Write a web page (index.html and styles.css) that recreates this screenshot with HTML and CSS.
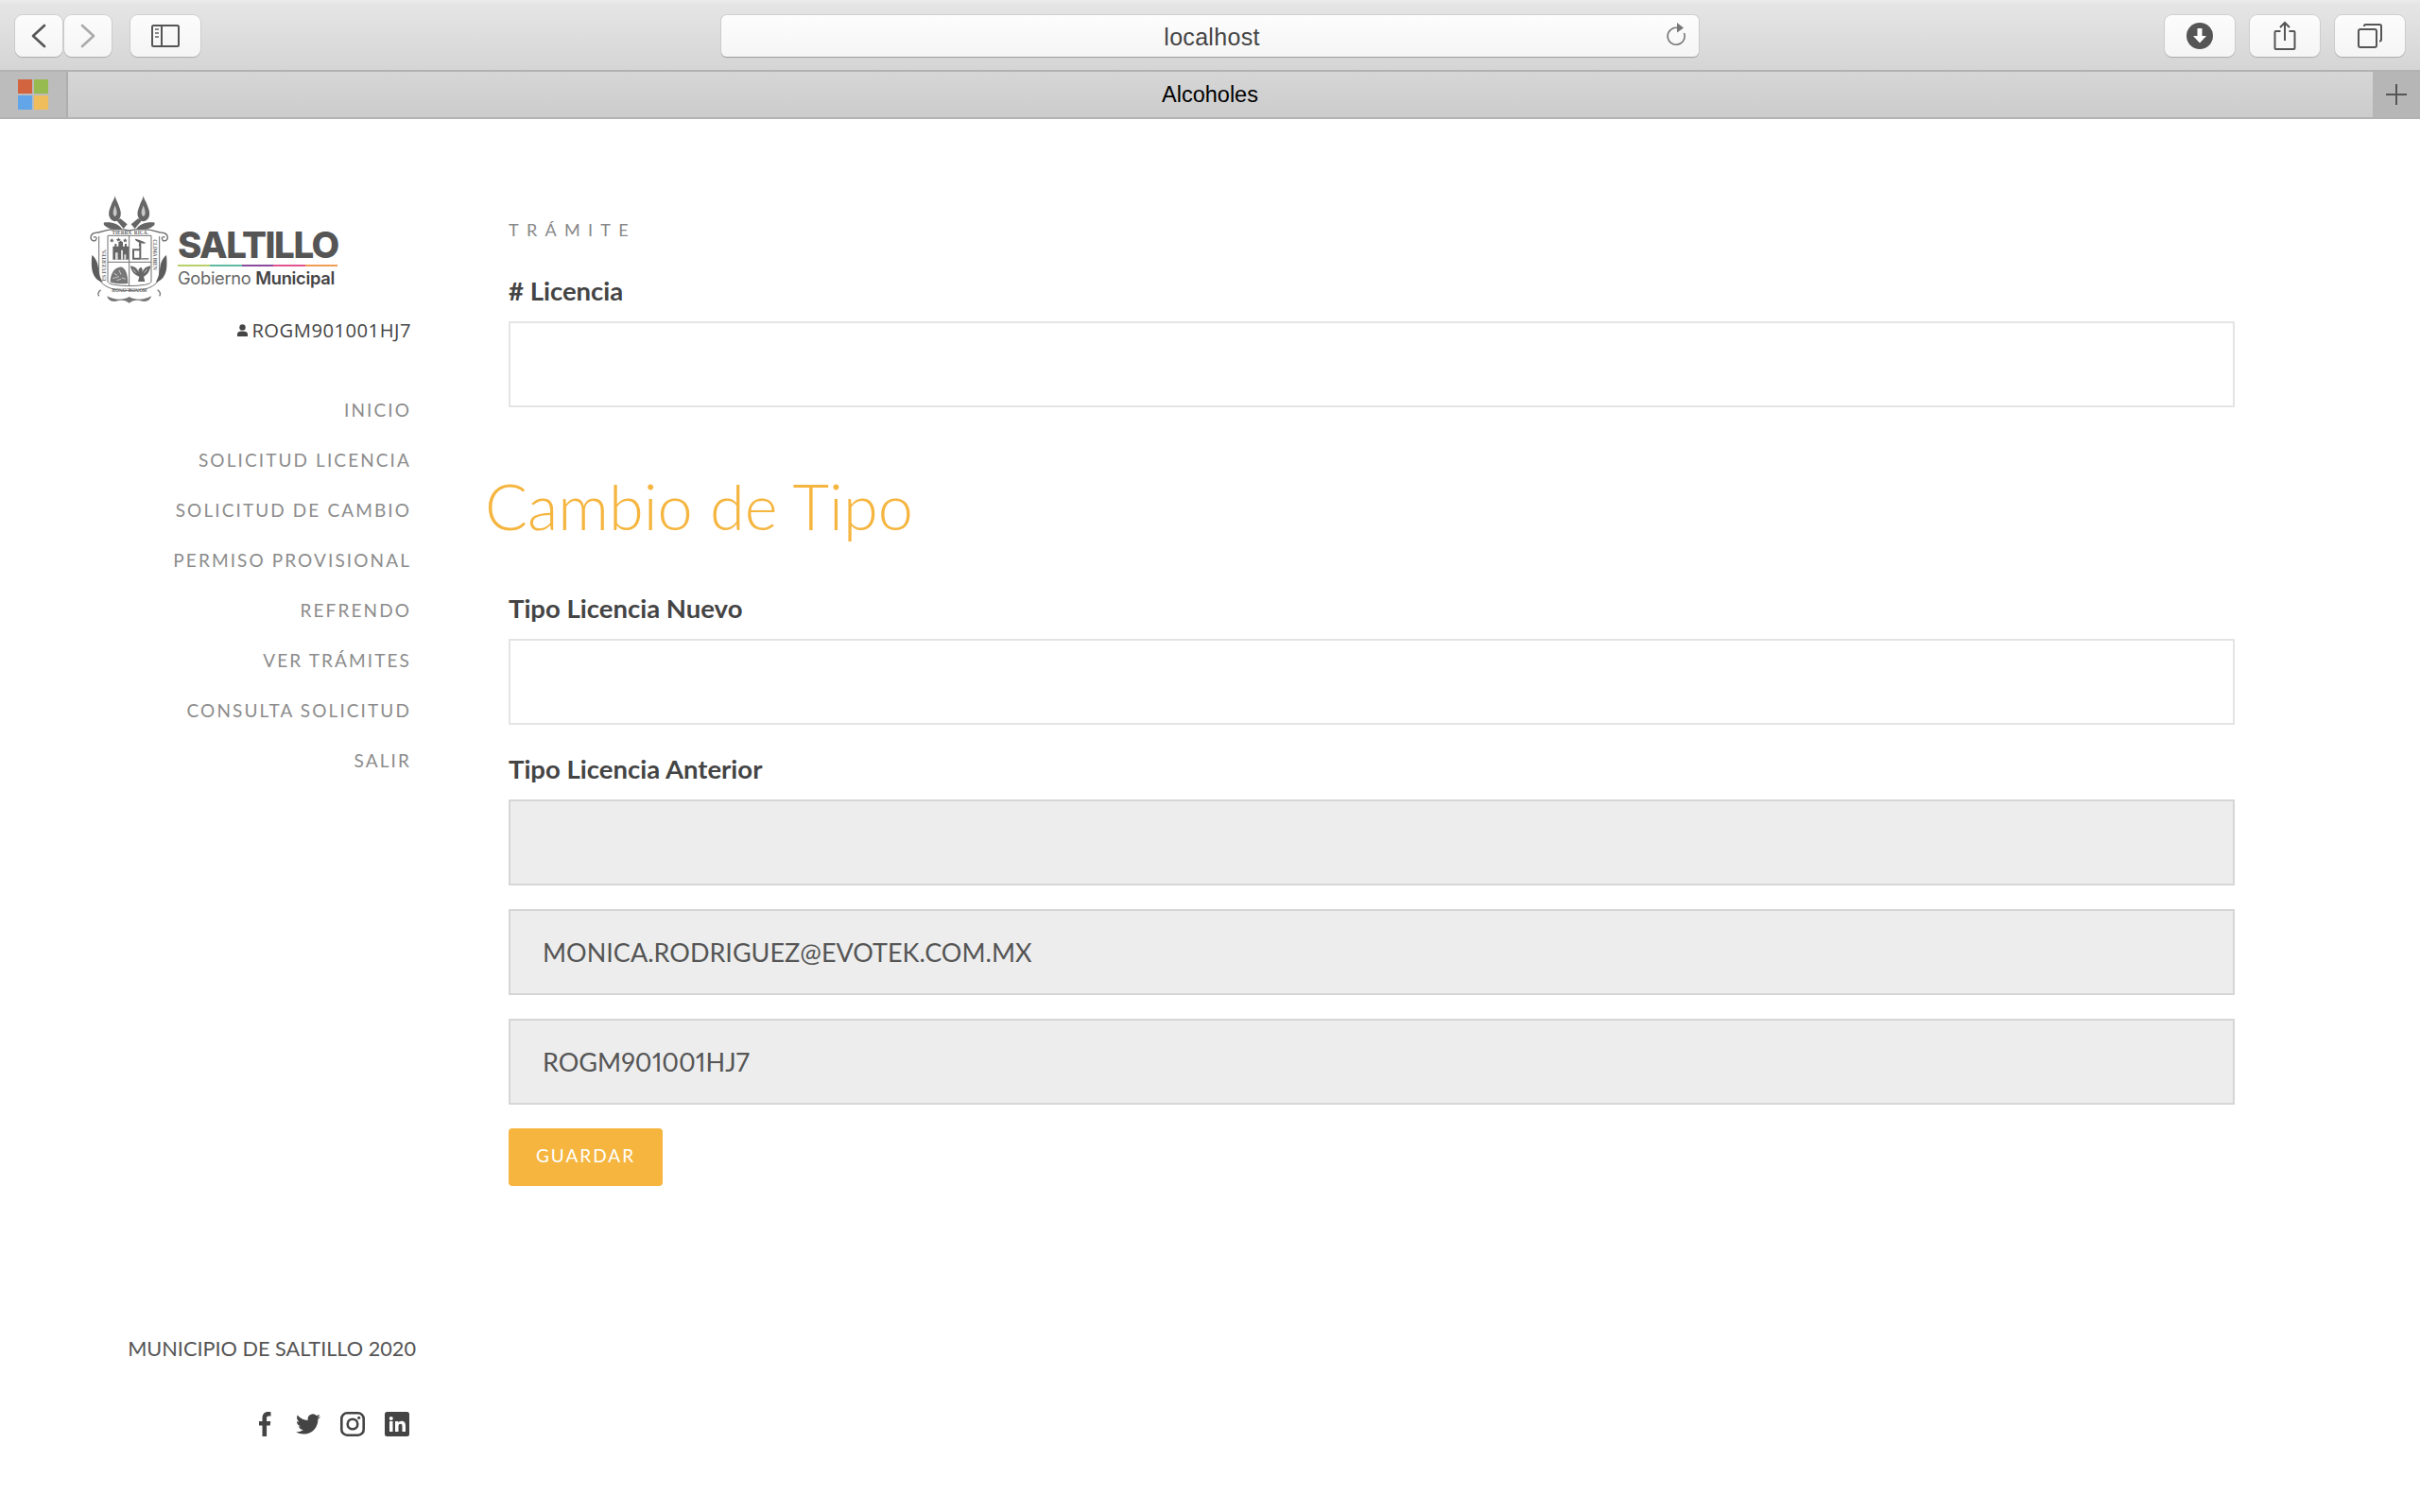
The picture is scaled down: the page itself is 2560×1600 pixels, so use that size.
FILE: index.html
```html
<!DOCTYPE html>
<html lang="en">
<head>
    <meta charset="UTF-8">
    <meta name="viewport" content="width=device-width, initial-scale=1.0">
    <title>Alcoholes</title>
    <link rel="stylesheet" href="styles.css">
</head>
<body>
    <header class="toolbar">
        <div class="btn btn-nav">
            <svg width="16" height="26" viewBox="0 0 16 26"><path d="M14 2 2 13l12 11" fill="none" stroke="#555" stroke-width="2.6" stroke-linecap="round" stroke-linejoin="round"/></svg>
        </div>
        <div class="btn btn-nav btn-next">
            <svg width="16" height="26" viewBox="0 0 16 26"><path d="M2 2l12 11L2 24" fill="none" stroke="#aaa" stroke-width="2.6" stroke-linecap="round" stroke-linejoin="round"/></svg>
        </div>
        <div class="btn btn-side">
            <svg width="30" height="26" viewBox="0 0 30 26"><rect x="1" y="2" width="28" height="22" rx="1.5" fill="none" stroke="#555" stroke-width="2"/><path d="M11 2v22" stroke="#555" stroke-width="2"/><path d="M4 6h4M4 10h4M4 14h4" stroke="#888" stroke-width="2"/></svg>
        </div>
        <div class="url-bar">
            <span class="url-text">localhost</span>
            <svg class="reload" width="24" height="28" viewBox="0 0 24 28"><path d="M14 6.500A9 9 0 1 0 20.500 12" fill="none" stroke="#777" stroke-width="1.600"/><path d="M13 1l7 5.500-7 5z" fill="#777"/></svg>
        </div>
        <div class="btn btn-tool btn-first">
            <svg width="28" height="28" viewBox="0 0 28 28"><circle cx="14" cy="14" r="14" fill="#555"/><path d="M11.500 6h5v8h4.500L14 21.500 7 14h4.500z" fill="#fff"/></svg>
        </div>
        <div class="btn btn-tool">
            <svg width="24" height="32" viewBox="0 0 24 32"><path d="M7.500 11H2.500a1 1 0 0 0-1 1v17a1 1 0 0 0 1 1h19a1 1 0 0 0 1-1V12a1 1 0 0 0-1-1h-5" fill="none" stroke="#555" stroke-width="2"/><path d="M12 2v19M7 7l5-5 5 5" fill="none" stroke="#555" stroke-width="2"/></svg>
        </div>
        <div class="btn btn-tool">
            <svg width="26" height="26" viewBox="0 0 26 26"><rect x="1" y="6" width="19" height="19" rx="2" fill="none" stroke="#555" stroke-width="2"/><path d="M7 3V2.500A1.500 1.500 0 0 1 8.500 1h15A1.500 1.500 0 0 1 25 2.500V17a1.500 1.500 0 0 1-1.500 1.500H23" fill="none" stroke="#555" stroke-width="2"/></svg>
        </div>
    </header>

    <div class="tabbar">
        <div class="tab-fav">
            <span class="sq sq-red"></span><span class="sq sq-green"></span>
            <span class="sq sq-blue"></span><span class="sq sq-yellow"></span>
        </div>
        <div class="tab-title">Alcoholes</div>
        <div class="tab-plus">
            <svg width="22" height="22" viewBox="0 0 22 22"><path d="M11 0v22M0 11h22" stroke="#555" stroke-width="2"/></svg>
        </div>
    </div>

    <div class="page">
        <aside class="sidebar">
            <div class="logo">
                <svg class="crest" width="95" height="128" viewBox="0 0 285 384">
                    <!-- torches -->
                    <g fill="#666">
                        <path d="M95 22c2 12 7 16 11 28 5 14 10 24 6 38-3 9-9 14-17 15-8-1-15-6-18-15-4-14 1-24 6-38 4-12 10-16 12-28z"/>
                        <path d="M185 22c-2 12-7 16-11 28-5 14-10 24-6 38 3 9 9 14 17 15 8-1 15-6 18-15 4-14-1-24-6-38-4-12-10-16-12-28z"/>
                        <path d="M100 100l12-6 22 18-12 14z"/>
                        <path d="M180 100l-12-6-22 18 12 14z"/>
                    </g>
                    <g fill="#c8c8c8">
                        <path d="M95 52c2 7 6 14 6 24 0 6-3 10-6 11-3-1-6-5-6-11 0-10 4-17 6-24z"/>
                        <path d="M185 52c2 7 6 14 6 24 0 6-3 10-6 11-3-1-6-5-6-11 0-10 4-17 6-24z"/>
                    </g>
                    <!-- frame -->
                    <g fill="none" stroke="#707070">
                        <path d="M42 138c30-10 62-14 98-6 36-8 68-4 98 6" stroke-width="4"/>
                        <path d="M42 138c-8 0-24 0-24 16 0 12 16 14 18 4 1-6-6-8-9-4" stroke-width="4"/>
                        <path d="M238 138c8 0 24 0 24 16 0 12-16 14-18 4-1-6 6-8 9-4" stroke-width="4"/>
                        <path d="M44 150v128c0 20 24 34 46 40 32 6 68 6 100 0 22-6 46-20 46-40V150" stroke-width="3"/>
                        <path d="M72 148h138v146c0 4-8 8-20 10-32 5-66 5-98 0-12-2-20-6-20-10z" stroke-width="3"/>
                        <path d="M140 148v158M72 232h138" stroke-width="3"/>
                    </g>
                    <!-- side scrolls -->
                    <path d="M22 210c10 8 18 20 20 40 2 18 6 34 14 46-18-4-30-18-34-40-2-14-2-30 0-46z" fill="#5c5c5c"/>
                    <path d="M258 210c-10 8-18 20-20 40-2 18-6 34-14 46 18-4 30-18 34-40 2-14 2-30 0-46z" fill="#5c5c5c"/>
                    <path d="M62 106c24-2 44 4 56 22-20 4-42 0-56-12-4-3-4-9 0-10z" fill="#666"/>
                    <path d="M218 106c-24-2-44 4-56 22 20 4 42 0 56-12 4-3 4-9 0-10z" fill="#666"/>
                    <!-- bottom ornament -->
                    <path d="M70 340c22 12 50 14 70 2 20 12 48 10 70-2-2 12-14 20-28 16-14-3-24-6-42 6-18-12-28-9-42-6-14 4-26-4-28-16z" fill="#777"/>
                    <path d="M50 320c-8 6-10 14-6 20M230 320c8 6 10 14 6 20" fill="none" stroke="#777" stroke-width="4"/>
                    <!-- castle -->
                    <path d="M88 224v-42h6v-8h6v8h6v-14h4v-4h6v4h4v14h6v-8h6v8h6v42z" fill="#666"/>
                    <path d="M96 224v-22h8v22zM114 224v-30h6v30zM124 208h6v16h-6z" fill="#ddd"/>
                    <path d="M85 156l2.500 5h5l-4 3.500 1.500 5-5-3-5 3 1.500-5-4-3.500h5zM106 154l2.500 5h5l-4 3.500 1.500 5-5-3-5 3 1.500-5-4-3.500h5zM127 156l2.500 5h5l-4 3.500 1.500 5-5-3-5 3 1.500-5-4-3.500h5z" fill="#666"/>
                    <!-- bird and tower -->
                    <path d="M158 158c12 2 24 6 36 14-6 2-12 2-16 0l-4 10-4-2 2-10c-6-2-12-6-14-12z" fill="#666"/>
                    <path d="M150 224v-34h22v-16h6v50zM156 218h16v-22h-16z" fill="#666" fill-rule="evenodd"/>
                    <path d="M178 224h24v-5h-24z" fill="#888"/>
                    <!-- mountain -->
                    <path d="M80 296c0-26 12-46 30-48 16-2 26 18 26 52-20 2-38 0-56-4z" fill="#777"/>
                    <path d="M92 268l10 6M108 258l6 14M88 284l20-6M116 282l12 4M100 290l14-4" stroke="#ccc" stroke-width="3"/>
                    <!-- eagle -->
                    <path d="M144 244c12 2 20 8 26 14 2-8 6-10 10-8l2 8c6-6 14-12 26-14-2 18-12 30-22 34l4 16h-22l4-16c-14-4-26-16-28-34z" fill="#666"/>
                    <path d="M152 254l10 12M162 250l8 12M198 254l-10 12M188 252l-6 10" stroke="#ddd" stroke-width="2.500"/>
                    <!-- mottos -->
                    <text class="crest-motto" x="143" y="144" text-anchor="middle">TIERRA&#160;&#160;RICA.</text>
                    <text class="crest-motto" transform="translate(67 292) rotate(-90)">ES FUERTES.</text>
                    <text class="crest-motto" transform="translate(216 160) rotate(90)">CLIMA BIEN</text>
                    <text class="crest-motto" transform="translate(196 316) rotate(180)">HONOR.ONOR</text>
                </svg>
                <div class="wordmark">
                    <div class="wordmark-name">SALTILLO</div>
                    <div class="wordmark-line"></div>
                    <div class="wordmark-sub">Gobierno <b>Municipal</b></div>
                </div>
            </div>
            <div class="user">
                <svg width="11" height="13" viewBox="0 0 11 13"><circle cx="5.500" cy="3.400" r="3.200" fill="#444"/><path d="M0 13v-2.500C0 8.500 2 7.500 5.500 7.500S11 8.500 11 10.500V13z" fill="#444"/></svg>
                <span>ROGM901001HJ7</span>
            </div>
            <nav class="menu">
                <a href="#">INICIO</a>
                <a href="#">SOLICITUD LICENCIA</a>
                <a href="#">SOLICITUD DE CAMBIO</a>
                <a href="#">PERMISO PROVISIONAL</a>
                <a href="#">REFRENDO</a>
                <a href="#">VER TRÁMITES</a>
                <a href="#">CONSULTA SOLICITUD</a>
                <a href="#">SALIR</a>
            </nav>
            <footer class="side-footer">
                <p class="copy">MUNICIPIO DE SALTILLO 2020</p>
                <div class="social">
                    <svg width="26" height="26" viewBox="0 0 26 26"><path d="M10.500 26V14.500H7V10h3.500V6.800C10.500 2.500 12.800 0 16.500 0c1.500 0 2.700.1 3 .2v4.200h-2.200c-1.800 0-2.200.9-2.200 2.200V10h4.200l-.6 4.500h-3.600V26z" fill="#444"/></svg>
                    <svg width="26" height="26" viewBox="0 0 24 24"><path d="M23.953 4.570a10 10 0 0 1-2.825.775 4.958 4.958 0 0 0 2.163-2.723c-.951.555-2.005.959-3.127 1.184a4.920 4.920 0 0 0-8.384 4.482C7.690 8.095 4.067 6.130 1.640 3.162a4.822 4.822 0 0 0-.666 2.475c0 1.710.870 3.213 2.188 4.096a4.904 4.904 0 0 1-2.228-.616v.060a4.923 4.923 0 0 0 3.946 4.827 4.996 4.996 0 0 1-2.212.085 4.936 4.936 0 0 0 4.604 3.417 9.867 9.867 0 0 1-6.102 2.105c-.390 0-.779-.023-1.170-.067a13.995 13.995 0 0 0 7.557 2.209c9.053 0 13.998-7.496 13.998-13.985 0-.210 0-.420-.015-.630A9.935 9.935 0 0 0 24 4.590z" fill="#444"/></svg>
                    <svg width="26" height="26" viewBox="0 0 26 26"><rect x="1.300" y="1.300" width="23.400" height="23.400" rx="6" fill="none" stroke="#444" stroke-width="2.600"/><circle cx="13" cy="13" r="5.300" fill="none" stroke="#444" stroke-width="2.600"/><circle cx="19.700" cy="6.300" r="1.600" fill="#444"/></svg>
                    <svg width="26" height="26" viewBox="0 0 26 26"><rect width="26" height="26" rx="2.500" fill="#444"/><path d="M5 10h3.500v11H5zM6.750 5a2 2 0 1 1 0 4 2 2 0 0 1 0-4zM11 10h3.300v1.500c.6-1 1.800-1.800 3.500-1.800 3.300 0 4.200 2.100 4.200 5.200V21h-3.500v-5.400c0-1.500-.3-2.800-1.900-2.800s-2.100 1.200-2.100 2.800V21H11z" fill="#fff"/></svg>
                </div>
            </footer>
        </aside>

        <main class="content">
            <h6 class="eyebrow">TRÁMITE</h6>
            <label class="field-label" for="licencia"># Licencia</label>
            <input class="field" type="text" id="licencia">

            <h1 class="title">Cambio de Tipo</h1>

            <label class="field-label label-next" for="nuevo">Tipo Licencia Nuevo</label>
            <input class="field" type="text" id="nuevo">

            <label class="field-label label-next" for="anterior">Tipo Licencia Anterior</label>
            <input class="field field-off" type="text" id="anterior" readonly>
            <input class="field field-off field-gap" type="text" value="MONICA.RODRIGUEZ@EVOTEK.COM.MX" readonly>
            <input class="field field-off field-gap" type="text" value="ROGM901001HJ7" readonly>

            <button class="save" type="button">GUARDAR</button>
        </main>
    </div>
</body>
</html>
```

FILE: styles.css
```css
* {
    box-sizing: border-box;
}
body {
    margin: 0;
    height: 100vh;
    display: flex;
    flex-direction: column;
    background: #fff;
    font-family: "Lato", sans-serif;
    color: #444;
    overflow: hidden;
}

/* browser chrome */
.toolbar {
    height: 76px;
    display: flex;
    align-items: flex-start;
    padding: 16px 16px 0;
    background: linear-gradient(#ececec 0, #e5e5e5 6%, #d5d5d5 100%);
    border-bottom: 2px solid #b2b2b2;
}
.btn {
    height: 44px;
    display: flex;
    align-items: center;
    justify-content: center;
    background: linear-gradient(#fcfcfc, #f5f5f5);
    border-radius: 8px;
    box-shadow: 0 1px 1px #aaa, 0 0 0 1px #d0d0d0;
}
.btn-nav {
    width: 50px;
}
.btn-next {
    margin-left: 2px;
}
.btn-side {
    width: 74px;
    margin-left: 20px;
}
.btn-tool {
    width: 74px;
    margin-left: 16px;
}
.btn-first {
    margin-left: auto;
}
.url-bar {
    width: 1034px;
    height: 44px;
    margin-left: 551px;
    padding: 2px 0 0 4px;
    display: flex;
    align-items: center;
    justify-content: center;
    position: relative;
    background: linear-gradient(#fdfdfd, #f5f5f5);
    border-radius: 6px;
    box-shadow: 0 1px 1px #999, 0 0 0 1px #d0d0d0;
}
.url-text {
    font-family: "Liberation Sans", sans-serif;
    font-size: 25px;
    letter-spacing: .3px;
    color: #444;
}
.reload {
    position: absolute;
    right: 12px;
    top: 7px;
}
.tabbar {
    height: 50px;
    display: flex;
    background: linear-gradient(#d6d6d6, #cccccc);
    border-bottom: 2px solid #b2b2b2;
}
.tab-fav {
    width: 72px;
    padding: 8px 0 0 19px;
    display: grid;
    grid-template-columns: 15px 15px;
    grid-template-rows: 15px 15px;
    gap: 2px;
    background: #bcbcbc;
    border-right: 2px solid #aeaeae;
}
.sq-red { background: #d2653f; }
.sq-green { background: #97bb4e; }
.sq-blue { background: #62a5e8; }
.sq-yellow { background: #f0bd5c; }
.tab-title {
    flex: 1;
    padding-right: 22px;
    text-align: center;
    font-family: "Liberation Sans", sans-serif;
    font-size: 23.500px;
    line-height: 48px;
    color: #000;
}
.tab-plus {
    width: 50px;
    display: flex;
    align-items: center;
    justify-content: center;
    background: #b6b6b6;
}

/* page */
.page {
    flex: 1;
    display: flex;
    min-height: 0;
}
.sidebar {
    width: 538px;
    padding-top: 74px;
    display: flex;
    flex-direction: column;
    align-items: flex-end;
}
.logo {
    display: flex;
    align-items: flex-start;
    width: 345px;
    margin-right: 103px;
    gap: 3px;
}
.crest {
    flex: none;
}
.crest-motto {
    font-family: "Liberation Serif", serif;
    font-size: 16px;
    font-weight: 700;
    fill: #666;
}
.wordmark {
    width: 169px;
    padding-top: 39px;
}
.wordmark-name {
    font-family: "Inter", sans-serif;
    font-weight: 800;
    font-size: 38.500px;
    line-height: 41px;
    letter-spacing: -1.500px;
    color: #555;
    white-space: nowrap;
}
.wordmark-line {
    height: 2px;
    background: linear-gradient(90deg, #b7d06a 0 20%, #5fbb9f 20% 40%, #8b4a9c 40% 60%, #e0558f 60% 80%, #ef9d52 80%);
}
.wordmark-sub {
    font-family: "Inter", sans-serif;
    font-size: 18.300px;
    line-height: 24px;
    letter-spacing: -.3px;
    color: #666;
    white-space: nowrap;
}
.wordmark-sub b {
    font-weight: 600;
    color: #444;
}
.user {
    display: flex;
    align-items: center;
    gap: 4px;
    margin: 8px 103px 0 0;
    font-family: "Open Sans", sans-serif;
    font-size: 20.200px;
    line-height: 26px;
    letter-spacing: .5px;
    color: #444;
}
.menu {
    display: flex;
    flex-direction: column;
    align-items: flex-end;
    margin: 45px 103px 0 0;
}
.menu a {
    height: 53px;
    line-height: 53px;
    font-size: 19px;
    letter-spacing: 2.100px;
    color: #8c8c8c;
    text-decoration: none;
}
.side-footer {
    margin-top: auto;
    padding-bottom: 80px;
    margin-right: 98px;
    display: flex;
    flex-direction: column;
    align-items: flex-end;
}
.copy {
    margin: 0;
    font-size: 21.700px;
    line-height: 28px;
    color: #555;
}
.social {
    display: flex;
    gap: 20.800px;
    margin: 53px 7px 0 0;
}

/* form */
.content {
    flex: 1;
    padding: 106px 196px 0 0;
    display: flex;
    flex-direction: column;
    align-items: flex-start;
}
.eyebrow {
    margin: 0;
    font-size: 18px;
    line-height: 22px;
    font-weight: 400;
    letter-spacing: 8.300px;
    color: #888;
}
.field-label {
    margin-top: 38px;
    font-size: 27.500px;
    line-height: 32px;
    font-weight: 700;
    color: #444;
}
.label-next {
    margin-top: 31px;
}
.field {
    width: 100%;
    height: 91px;
    margin-top: 16px;
    padding: 0 34px;
    border: 2px solid #e4e4e4;
    border-radius: 0;
    background: #fff;
    font-family: "Lato", sans-serif;
    font-size: 27px;
    font-variant-numeric: proportional-nums;
    color: #555;
    outline: none;
}
.field-off {
    background: #ededed;
    border-color: #d6d6d6;
}
.field-gap {
    margin-top: 25px;
}
.title {
    margin: 69px 0 27px -25px;
    font-size: 66.700px;
    line-height: 70px;
    font-weight: 300;
    color: #f5b53f;
}
.save {
    width: 163px;
    height: 61px;
    margin-top: 25px;
    padding-bottom: 5px;
    border: 0;
    border-radius: 4px;
    background: #f5b53f;
    font-family: "Lato", sans-serif;
    font-size: 19px;
    letter-spacing: 2px;
    color: #fff;
}
```
